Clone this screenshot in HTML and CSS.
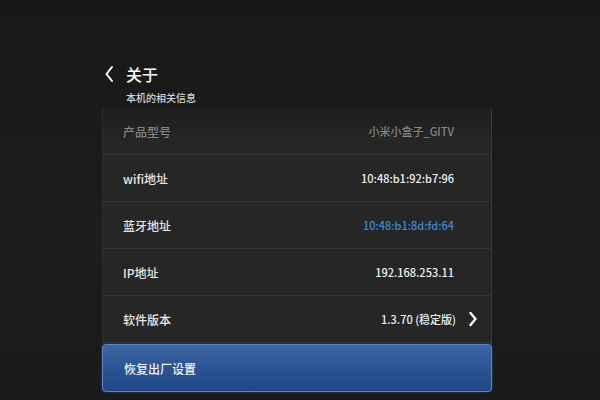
FILE: index.html
```html
<!DOCTYPE html>
<html lang="zh">
<head>
	<meta charset="UTF-8" />
	<meta name="viewport" content="width=device-width, initial-scale=1.0" />
	<title>关于</title>
	<link rel="stylesheet" href="styles.css">
</head>
<body>
	<div class="screen">
		<div class="head">
			<div class="title">
				<svg class="back" width="10" height="18" viewBox="0 0 10 18"><path d="M8 2 L2.5 9 L8 16" fill="none" stroke="#fff" stroke-width="2" stroke-linecap="round" stroke-linejoin="round"/></svg>
				<span>关于</span>
			</div>
			<p class="sub">本机的相关信息</p>
		</div>
		<div class="panel">
			<div class="row fade">
				<span class="label">产品型号</span>
				<span class="val">小米小盒子_GITV</span>
			</div>
			<div class="row">
				<span class="label">wifi地址</span>
				<span class="val">10:48:b1:92:b7:96</span>
			</div>
			<div class="row">
				<span class="label">蓝牙地址</span>
				<span class="val blue">10:48:b1:8d:fd:64</span>
			</div>
			<div class="row">
				<span class="label">IP地址</span>
				<span class="val">192.168.253.11</span>
			</div>
			<div class="row">
				<span class="label">软件版本</span>
				<span class="val">1.3.70 (稳定版)</span>
				<svg class="more" width="10" height="16" viewBox="0 0 10 16"><path d="M2.5 2 L7.5 8 L2.5 14" fill="none" stroke="#fff" stroke-width="2.4" stroke-linecap="round" stroke-linejoin="round"/></svg>
			</div>
			<div class="btn">恢复出厂设置</div>
		</div>
	</div>
</body>
</html>
```

FILE: styles.css
```css
*{margin: 0;padding: 0;box-sizing: border-box;}
body{
	width: 600px;height: 400px;overflow: hidden;
	background: #1b1b1b;
	font-family: "Noto Sans CJK SC", "Noto Sans", sans-serif;
	color: #e6e6e6;
}
.screen{
	height: 400px;
	background: linear-gradient(#181818, #1d1d1d 60%, #1a1a1a);
}
.head{padding: 63px 0 0 104px;height: 108px;}
.title{display: flex;align-items: center;gap: 12px;}
.back{display: block;}
.title span{font-size: 16px;line-height: 22px;color: #fff;font-weight: 500;}
.sub{
	font-size: 10px;line-height: 14px;color: #d4d4d4;font-weight: 500;
	margin: 6px 0 0 22px;
}
.panel{
	margin-left: 102px;width: 390px;
	background: #262626;
	border-left: 1px solid #2e2e2e;border-right: 1px solid #3a3a3a;
}
.row{
	height: 47px;display: flex;align-items: center;
	padding: 0 37px 0 20px;
	border-bottom: 1px solid #353535;
	font-size: 12px;font-weight: 500;
}
.row .label{flex: 1;}
.row .val{font-size: 11px;color: #f0f0f0;}
.row .val.blue{color: #3f8ad6;}
.row .more{margin-left: 12px;margin-right: -24px;}
.fade{
	background: linear-gradient(#1c1c1c, #262626 70%);
	color: #858585;
}
.fade .val{color: #858585;}
.btn{
	height: 48px;margin: 1px -1px 0;
	display: flex;align-items: center;padding-left: 21px;
	font-size: 12px;font-weight: 500;color: #f2f2f2;
	border: 1px solid #5d86c4;border-radius: 4px;
	background: linear-gradient(#3c66a3, #2a5494 50%, #1f4884);
	box-shadow: 0 0 3px rgba(40,90,170,0.6);
}
```
